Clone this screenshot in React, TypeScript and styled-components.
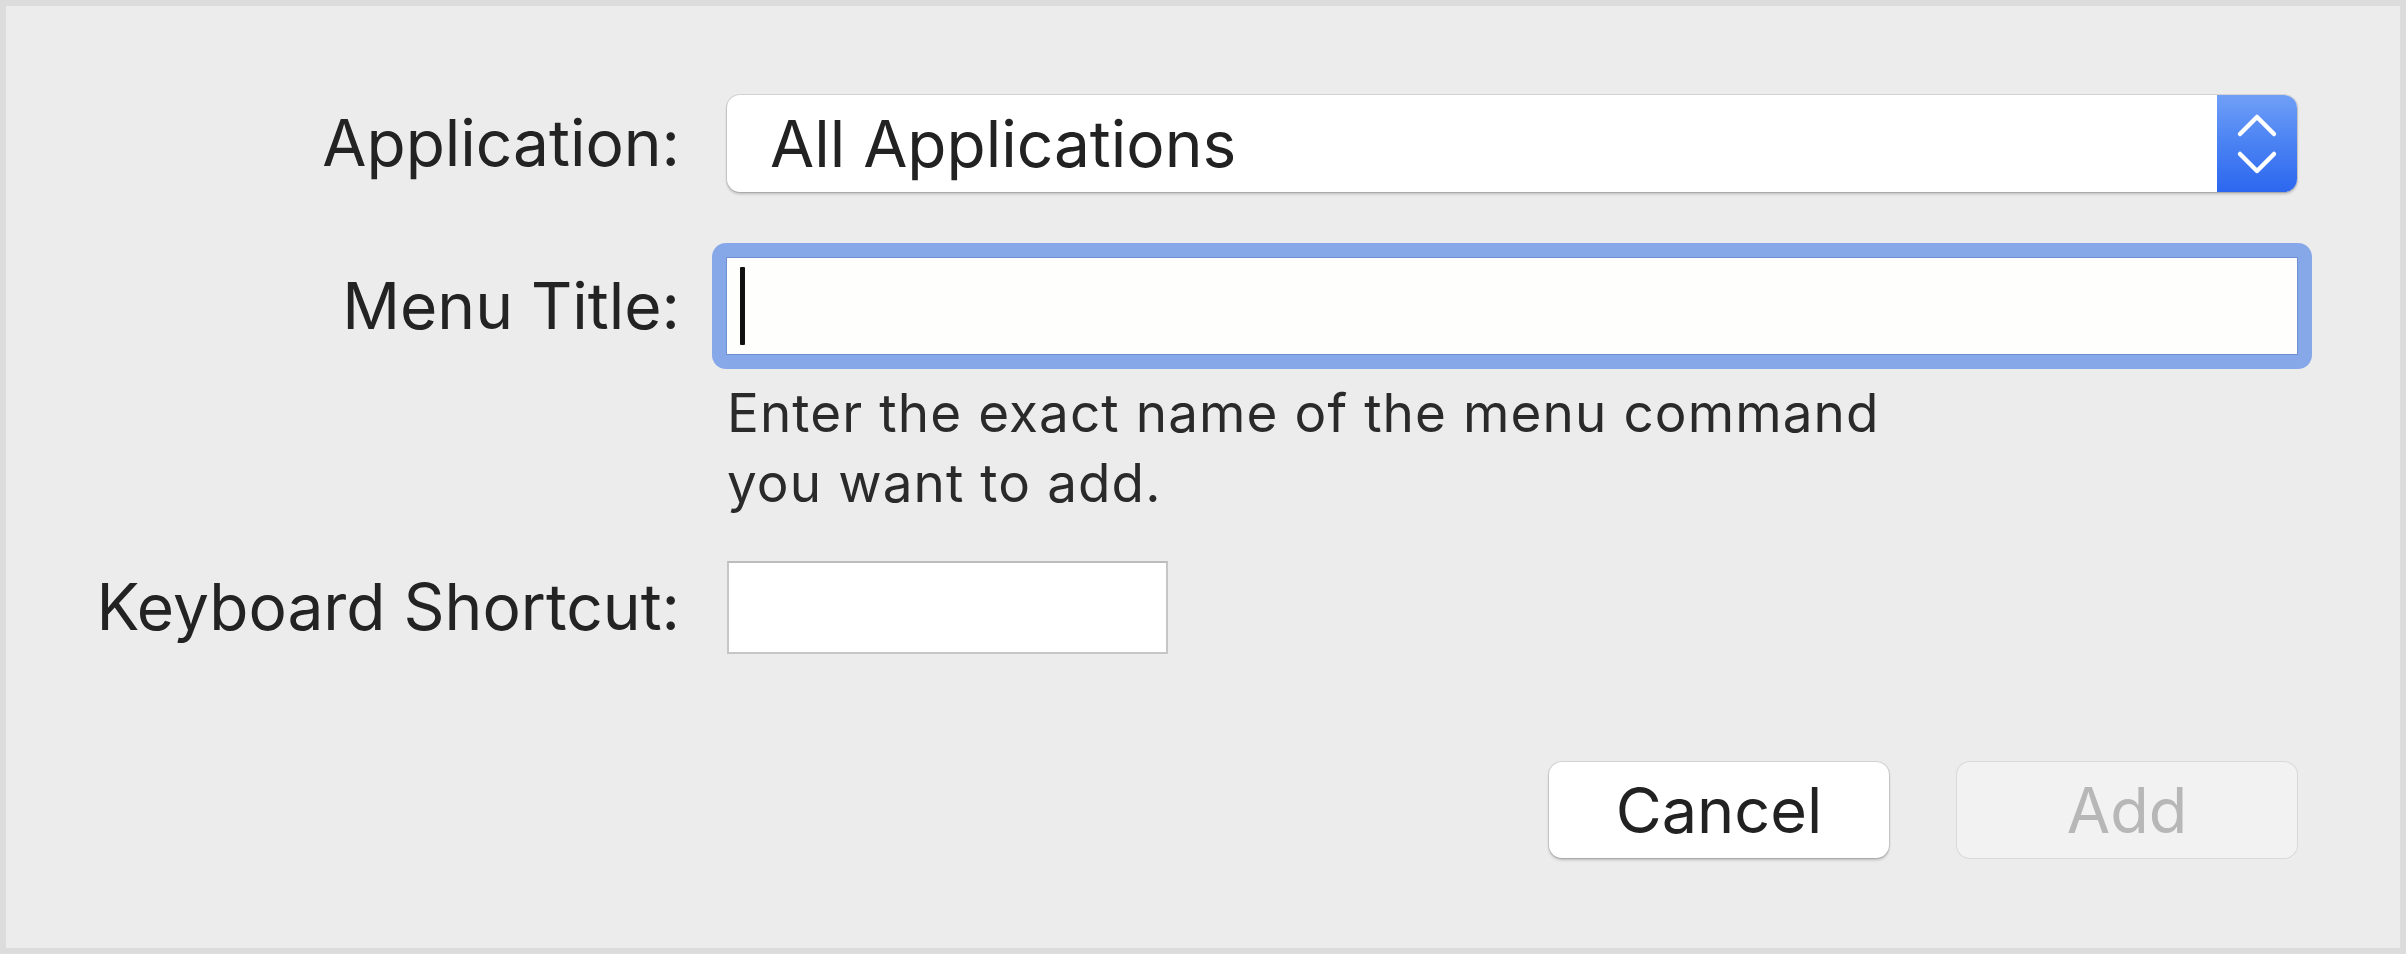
import React from "react";
import styled, { createGlobalStyle } from "styled-components";

const Global = createGlobalStyle`
  html, body { margin: 0; padding: 0; background: #ececec; }
  * { box-sizing: border-box; }
`;

const Dialog = styled.div`
  width: 100vw;
  height: 100vh;
  border: 6px solid #dcdcdc;
  background: #ececec;
  font-family: Inter, "Liberation Sans", Arial, sans-serif;
  color: #232323;
  display: flex;
  flex-direction: column;
  padding-top: 89px;
`;

const Row = styled.div<{ $mt?: number }>`
  display: grid;
  grid-template-columns: 674px 1570px;
  column-gap: 47px;
  align-items: center;
  margin-top: ${(p) => p.$mt ?? 0}px;
`;

const Label = styled.div`
  text-align: right;
  font-size: 64px;
  line-height: 1.2;
  white-space: nowrap;
`;

const Select = styled.div`
  height: 97px;
  display: flex;
  align-items: stretch;
  background: #ffffff;
  border-radius: 13px;
  box-shadow: 0 0 0 1px rgba(0, 0, 0, 0.1), 0 2px 3px rgba(0, 0, 0, 0.22);
`;

const SelectValue = styled.div`
  flex: 1;
  display: flex;
  align-items: center;
  padding-left: 43px;
  font-size: 64px;
  color: #222;
`;

const Stepper = styled.div`
  width: 80px;
  border-radius: 0 13px 13px 0;
  background: linear-gradient(180deg, #6f9ff7 0%, #4a82f3 50%, #2c67ef 100%);
  display: flex;
  align-items: center;
  justify-content: center;
`;

const FocusRing = styled.div`
  margin: -15px;
  padding: 14px;
  border-radius: 14px;
  background: #86a8e9;
`;

const TextField = styled.div<{ $h: number }>`
  height: ${(p) => p.$h}px;
  background: #fefefd;
  border: 1px solid #6f8fd3;
  display: flex;
  align-items: center;
  padding-left: 13px;
`;

const Caret = styled.span`
  display: block;
  width: 5px;
  height: 78px;
  background: #111;
  border-radius: 1px;
`;

const Help = styled.div`
  font-size: 53px;
  line-height: 70px;
  color: #2a2a2a;
  letter-spacing: 1.1px;
`;

const ShortcutBox = styled.div`
  width: 441px;
  height: 93px;
  background: #ffffff;
  border: 2px solid #c6c6c6;
  border-top-color: #bcbcbc;
`;

const Buttons = styled.div`
  display: flex;
  justify-content: flex-end;
  gap: 68px;
`;

const Button = styled.div<{ $disabled?: boolean }>`
  width: 340px;
  height: 96px;
  border-radius: 13px;
  display: flex;
  align-items: center;
  justify-content: center;
  font-size: 63px;
  background: ${(p) => (p.$disabled ? "#f2f2f2" : "#ffffff")};
  color: ${(p) => (p.$disabled ? "#b7b7b7" : "#222")};
  box-shadow: ${(p) =>
    p.$disabled
      ? "0 0 0 1px rgba(0,0,0,0.08)"
      : "0 0 0 1px rgba(0,0,0,0.1), 0 2px 3px rgba(0,0,0,0.22)"};
`;

const Chevrons = () => (
  <svg width="42" height="64" viewBox="0 0 42 64" fill="none">
    <path d="M4 22 L21 5 L38 22" stroke="#ffffff" strokeWidth="4.5" strokeLinecap="round" strokeLinejoin="round" />
    <path d="M4 42 L21 59 L38 42" stroke="#ffffff" strokeWidth="4.5" strokeLinecap="round" strokeLinejoin="round" />
  </svg>
);

export default function App() {
  return (
    <>
      <Global />
      <Dialog>
        <Row>
          <Label>Application:</Label>
          <Select>
            <SelectValue>All Applications</SelectValue>
            <Stepper>
              <Chevrons />
            </Stepper>
          </Select>
        </Row>
        <Row $mt={66}>
          <Label>Menu Title:</Label>
          <FocusRing>
            <TextField $h={98}>
              <Caret />
            </TextField>
          </FocusRing>
        </Row>
        <Row $mt={24}>
          <div />
          <Help>
            Enter the exact name of the menu command
            <br />
            you want to add.
          </Help>
        </Row>
        <Row $mt={43}>
          <Label>Keyboard Shortcut:</Label>
          <ShortcutBox />
        </Row>
        <Row $mt={108}>
          <div />
          <Buttons>
            <Button>Cancel</Button>
            <Button $disabled>Add</Button>
          </Buttons>
        </Row>
      </Dialog>
    </>
  );
}
